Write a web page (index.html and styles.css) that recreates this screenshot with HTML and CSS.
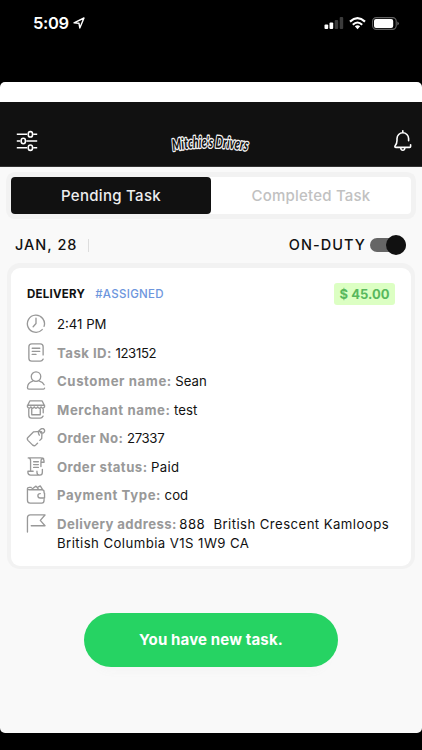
FILE: index.html
```html
<!DOCTYPE html>
<html lang="en">
<head>
<meta charset="utf-8">
<title>Driver Tasks</title>
<link rel="stylesheet" href="styles.css">
</head>
<body>
<div class="phone">
  <div class="status">
    <div class="clock"><span>5:09</span>
      <svg width="12" height="12" viewBox="0 0 12 12"><path d="M1 5.8 11 1 6.8 11 6 6.3Z" fill="none" stroke="#fff" stroke-width="1.4" stroke-linejoin="round"/></svg>
    </div>
    <div class="signals">
      <svg width="20" height="13" viewBox="0 0 20 13"><g fill="#fff"><rect x=".5" y="7.5" width="3.7" height="4.5" rx="1"/><rect x="5.5" y="5.5" width="3.7" height="6.5" rx="1"/></g><g fill="#3b3b3b"><rect x="10.7" y="3" width="3.5" height="9" rx="1"/><rect x="15.7" y="0" width="3.5" height="12" rx="1"/></g></svg>
      <svg class="wifi" width="17" height="13" viewBox="0 0 17 13"><g fill="none" stroke="#fff" stroke-width="2.1"><path d="M1 4.6Q8.5-2.2 16 4.6"/><path d="M3.8 7.7Q8.5 3.3 13.2 7.7"/></g><path d="m5.8 9.3q2.7-2.2 5.4 0L8.5 12.3Z" fill="#fff"/></svg>
      <svg class="battery" width="28" height="13" viewBox="0 0 28 13"><rect x=".6" y=".6" width="23.6" height="11.8" rx="3.6" fill="none" stroke="#626262" stroke-width="1.1"/><rect x="2" y="2" width="19.2" height="9" rx="2" fill="#fff"/><path d="M25.4 4.4q3 2.1 0 4.2Z" fill="#6b6b6b"/></svg>
    </div>
  </div>
  <main class="sheet">
    <header class="bar">
      <svg class="filters" width="22" height="22" viewBox="0 0 22 22"><g fill="none" stroke="#fff" stroke-width="1.6"><path d="M.8 4.3h10.4M17.2 4.3h4M.8 11h3.5M10.3 11h10.9M.8 17.7h10.4M17.2 17.7h4"/><rect x="12.3" y="1.6" width="4.2" height="5.4" rx="2.1"/><rect x="5.2" y="8.3" width="4.2" height="5.4" rx="2.1"/><rect x="12.3" y="15" width="4.2" height="5.4" rx="2.1"/></g></svg>
      <svg class="logo" width="96" height="36" viewBox="0 0 96 36"><path id="arc" d="M10 28Q44 21 86 28" fill="none"/><text><textPath href="#arc" textLength="75" lengthAdjust="spacingAndGlyphs">Mitchie's Drivers</textPath></text></svg>
      <svg class="bell" width="20" height="22" viewBox="0 0 20 22"><path d="M17.6 14.8v1.6q0 1-1 1H3q-1.6 0-1-1.3Q4 13.7 4 10.5V8.6a5.8 5.8 0 0 1 11.6 0v2.2M9.8 2.7V.8M7.7 18q.3 2.3 2.1 2.3T11.900 18" fill="none" stroke="#fff" stroke-width="1.6" stroke-linecap="round"/></svg>
    </header>
    <nav class="tabs"><a class="tab active">Pending Task</a><a class="tab done">Completed Task</a></nav>
    <div class="day">
      <span class="date">JAN, 28</span><i class="tick"></i>
      <span class="duty">ON-DUTY</span><span class="switch"><i class="knob"></i></span>
    </div>
    <article class="card">
      <div class="head"><b class="kind">DELIVERY</b><span class="state">#ASSIGNED</span><b class="price">$ 45.00</b></div>
      <div class="row"><svg viewBox="0 0 20 20"><path d="M16.5 16.4A9 9 0 1 1 18.5 13M10 4.5V10l-3 3.4"/></svg><p><span class="v time">2:41 PM</span></p></div>
      <div class="row"><svg viewBox="0 0 20 20"><path d="M17.5 12.5V4q0-3-3-3H5.5Q2.5 1 2.5 4v12q0 3 3 3h9q2 0 3-2M6 5.5h8M6 8.8h8M6 12h4"/></svg><p><b class="k task">Task ID:</b><span class="v num">123152</span></p></div>
      <div class="row"><svg viewBox="0 0 20 20"><circle cx="10" cy="5.9" r="5"/><path d="M6.5 10.6Q1 12.4 1 17.5 1 19 2.5 19H18q.8 0 1-1M13.6 10.6q3.7 1 4.9 4"/></svg><p><b class="k customer">Customer name:</b><span class="v sean">Sean</span></p></div>
      <div class="row"><svg viewBox="0 0 20 20"><path d="M3.5 1h13L19 6v1.2q-1.8 3-3.6 0-1.8 3-3.6 0-1.8 3-3.6 0-1.8 3-3.6 0-1.8 3-3.600 0V6ZM1 5.5h18M2.4 9.5V16q0 3 3 3h9q2 0 3-2M17.6 9.5v4M5.5 9.5v6h9v-6"/></svg><p><b class="k merchant">Merchant name:</b><span class="v test">test</span></p></div>
      <div class="row"><svg viewBox="0 0 20 20"><path d="M1.5 10 7.5 4l7-.5q1.800 0 1.800 1.500L16 11l-2 2M1.500 10q-1.300 1.300 0 3l5 5q1.800 1.300 3.100 0l2-2M13.500 7.500q-2.500-3.500 1.300-6.200Q17-.2 18.600 1.500q1.300 2.300-.8 3.600-2 .9-3-.3"/></svg><p><b class="k order">Order No:</b><span class="v ref">27337</span></p></div>
      <div class="row"><svg viewBox="0 0 20 20"><path d="M7 15H1.500v1.400Q1.500 19 4.200 19H14q2.700 0 2.700-3v-3M11 15v1q0 3 3 3M4.300 15V4Q4.300 1 1.800 1H15q3.700 0 3.500 4.500h-3.300V10M15.200 5Q15.200 1 18 1.500M7.500 5h5M7.500 8h5M7.500 11h5"/></svg><p><b class="k ostatus">Order status:</b><span class="v paid">Paid</span></p></div>
      <div class="row"><svg viewBox="0 0 20 20"><path d="M18.500 8.300V7q0-2-2.500-2H3Q1 5 1 3.800V16q0 3 3 3h12q2.500 0 2.500-3v-.8M19 8.500V13.700h-4.500q-2.500 0-2.500-2.500 0-2.200 2.500-2.200M1 3.800Q1 2.500 3 2.500h2M5 4.700l5-3.500L13 4.800M11.700 2.500 14.500 1l2.300 3.500"/></svg><p><b class="k payment">Payment Type:</b><span class="v cod">cod</span></p></div>
      <div class="row"><svg viewBox="0 0 20 20"><path d="M1 19V4q0-3 3-3h15.500L14.500 6.700l5 5.700H5"/></svg><p><b class="k address">Delivery address:</b><span class="v street">888&nbsp; British Crescent Kamloops</span><br><span class="v city">British Columbia V1S 1W9 CA</span></p></div>
    </article>
    <button class="toast">You have new task.</button>
  </main>
</div>
</body>
</html>
```
FILE: styles.css
```css
* { box-sizing: border-box; }
body { margin: 0; background: #000; font-family: Inter, "Liberation Sans", sans-serif; color: #111; }
.phone { width: 422px; height: 750px; overflow: hidden; display: flex; flex-direction: column; }
.status { height: 82px; flex: none; display: flex; justify-content: space-between; padding: 14.5px 22px 0 33px; color: #fff; }
.clock { display: flex; gap: 4px; height: 17px; align-items: center; font-size: 16.5px; font-weight: 600; letter-spacing: -.35px; }
.signals { display: flex; height: 17px; align-items: center; }
.wifi { margin-left: 5px; }
.battery { margin-left: 6px; }
.sheet { height: 651px; flex: none; background: #f9f9f9; border-top: 20px solid #fff; border-radius: 5px; overflow: hidden; display: flex; flex-direction: column; }
.bar { height: 65px; flex: none; background: #111; display: grid; grid-template-columns: 1fr 96px 1fr; align-items: center; padding: 13px 9px 0 16px; border-bottom: 1px solid #333; }
.logo { margin-left: -4px; }
.logo text { font: italic 900 16px Lato, sans-serif; fill: #111; stroke: #f2f2f2; stroke-width: 2.8px; stroke-linejoin: round; paint-order: stroke; }
.bell { justify-self: end; }
.tabs { display: flex; flex: none; width: 400px; height: 37px; margin: 10px 11px 0; background: #fff; border-radius: 4px; box-shadow: 0 0 0 5px #f2f2f2; }
.tab { width: 200px; display: flex; align-items: center; justify-content: center; font-size: 15px; font-weight: 500; }
.active { background: #111; color: #eee; border-radius: 4px; letter-spacing: .3px; }
.done { color: #c1c1c1; letter-spacing: .2px; }
.day { height: 54px; flex: none; display: flex; align-items: center; padding: 8px 16px 0 15px; font-size: 14.5px; font-weight: 500; }
.day span:not(.switch) { margin-top: -1px; }
.date { letter-spacing: 1px; }
.tick { width: 1px; height: 13px; background: #ddd; margin-left: 11px; }
.duty { margin-left: auto; letter-spacing: 1.05px; }
.switch { width: 36px; height: 14px; border-radius: 7px; background: #666; margin-left: 4px; display: flex; align-items: center; justify-content: flex-end; }
.knob { width: 20px; height: 20px; flex: none; border-radius: 50%; background: #111; }
.card { width: 400px; height: 298px; flex: none; margin: 0 11px; padding: 14px 16px 13px 15px; background: #fff; border-radius: 9px; box-shadow: 0 -1px 0 4px #f2f2f2; }
.head { display: flex; align-items: center; height: 24px; margin-bottom: 3px; padding-left: 1px; font-size: 11.5px; }
.kind { font-weight: 700; letter-spacing: .25px; }
.state { color: #6d96dd; margin-left: 10px; font-weight: 500; letter-spacing: .3px; }
.price { margin-left: auto; width: 61px; height: 22px; line-height: 22px; text-align: center; border-radius: 3px; background: #dcffc3; color: #58b85d; font-size: 13px; font-weight: 700; }
.row { display: flex; height: 28.57px; padding-top: 5px; gap: 11px; }
.row svg { width: 20px; height: 19px; flex: none; fill: none; stroke: #989898; stroke-width: 1.4; stroke-linecap: round; stroke-linejoin: round; }
.row p { margin: 1px 0 0; font-size: 13.2px; line-height: 19px; white-space: nowrap; }
.k { color: #999; font-weight: 700; margin-right: 3.5px; letter-spacing: .45px; }
.customer { letter-spacing: .58px; }
.merchant, .payment { letter-spacing: .6px; }
.address { margin-right: 2.5px; letter-spacing: .4px; }
.num, .ref { letter-spacing: -.35px; }
.paid { letter-spacing: .3px; }
.street, .city { letter-spacing: .43px; }
.toast { width: 254px; height: 54px; flex: none; margin: 47px auto 0 84px; padding: 0 0 2px; border: 0; border-radius: 27px; background: #26d363; color: #fff; font: 700 15px Inter, sans-serif; letter-spacing: .15px; box-shadow: 0 14px 9px -10px #f5f5f5; }
```
